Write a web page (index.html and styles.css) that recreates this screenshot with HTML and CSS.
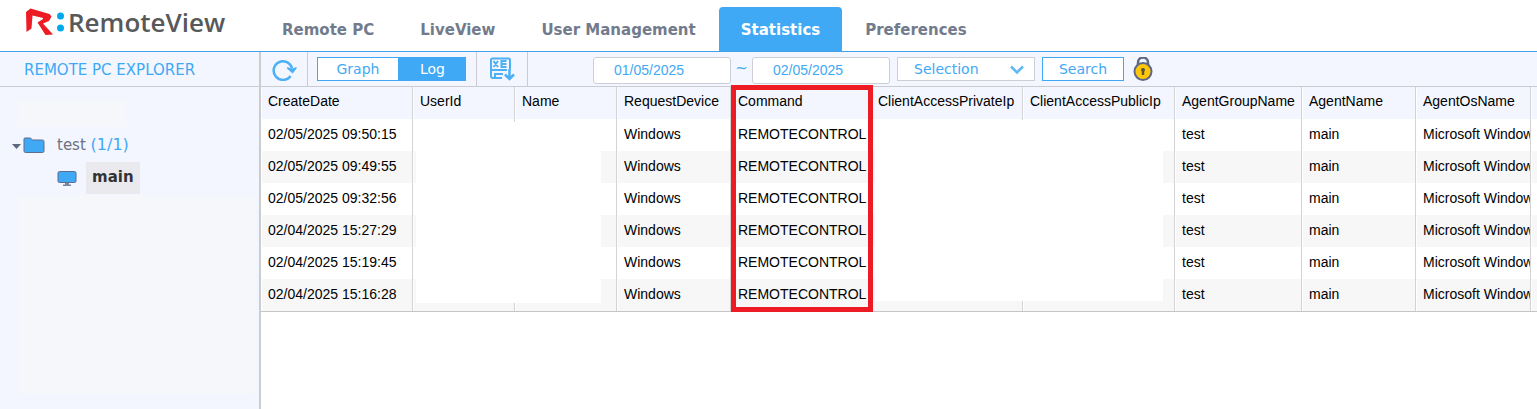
FILE: index.html
```html
<!DOCTYPE html>
<html lang="en">
<head>
<meta charset="utf-8">
<title>RemoteView</title>
<link rel="stylesheet" href="styles.css">
</head>
<body>
<div class="app">
  <header class="header">
    <a class="logo" href="#">
      <svg class="logo-mark" width="41" height="30" viewBox="0 0 41 30" aria-hidden="true">
        <path d="M1 4 L5.500 .500 L24.500 6 L26.500 8.500 L24 13 L18 15.500 L28 26.500 L20.500 27 L12.500 14.500 L18 11 L18 10 L7.500 7.500 L6.500 20.500 L1.500 24 Z" fill="#ed1c24"/>
        <circle cx="35.500" cy="8" r="3.500" fill="#00a9e8"/><circle cx="35.500" cy="20" r="3.500" fill="#00a9e8"/>
      </svg>
      <span class="logo-text">RemoteView</span>
    </a>
    <nav class="nav">
      <a class="tab" href="#">Remote PC</a>
      <a class="tab" href="#">LiveView</a>
      <a class="tab" href="#">User Management</a>
      <a class="tab active" href="#" aria-current="page">Statistics</a>
      <a class="tab" href="#">Preferences</a>
    </nav>
  </header>
  <div class="body">
    <aside class="sidebar">
      <h2 class="sidebar-title">REMOTE PC EXPLORER</h2>
      <div class="tree">
        <div class="blank blank-short"></div>
        <a class="node" href="#">
          <svg width="34" height="18" viewBox="0 0 34 18" aria-hidden="true">
            <path d="M0 8h9L4.500 13z" fill="#5d6780"/>
            <path d="M12 3q0-1 1-1h5.500l2 2h10q1.500 0 1.500 1.500v9.500q0 1.500-1.500 1.500h-17q-1.500 0-1.500-1.500z" fill="#3fa9f5" stroke="#5d6f8e"/>
          </svg>
          <span>test <span class="count">(1/1)</span></span>
        </a>
        <a class="node child" href="#">
          <svg width="20" height="16" viewBox="0 0 20 16" aria-hidden="true">
            <rect x="1" y="1.500" width="18" height="11" rx="1.500" fill="#3fa9f5" stroke="#5d6f8e"/>
            <path d="M8 13h4v1.500h2V16H6v-1.500h2z" fill="#7d879c"/>
          </svg>
          <strong class="chip">main</strong>
        </a>
        <div class="blank blank-tall"></div>
      </div>
    </aside>
    <main class="main">
      <form class="toolbar">
        <div class="cell cell-refresh">
          <button class="icon" type="button" aria-label="Refresh">
            <svg width="26" height="22" viewBox="0 0 26 22" fill="none">
              <path d="M19.500 17A9.300 9.300 0 1 1 21 9.500" stroke="#4bb0f5" stroke-width="2.500"/>
              <path d="M16.500 9l4.500 1.500L25 9l-3.500 4.500z" fill="#4bb0f5" stroke="#4bb0f5" stroke-width="1.500" stroke-linejoin="round"/>
            </svg>
          </button>
        </div>
        <div class="cell cell-view">
          <button class="view" type="button">Graph</button><button class="view selected" type="button" aria-pressed="true">Log</button>
        </div>
        <div class="cell cell-export">
          <button class="icon" type="button" aria-label="Export to Excel">
            <svg width="26" height="24" viewBox="0 0 26 24" fill="none" stroke="#4bb0f5" stroke-width="2">
              <path d="M2 14V3q0-1.500 1.500-1.500h16Q21 1.500 21 3v9M2 13h16M2 13v6q0 2 2 2h9M6 21v-4h8"/>
              <path d="M4.500 4l4.500 6M9 4l-4.500 6M12.500 3v8M12 4h5.500M12 7h5.500M12 10h5.500"/>
              <path d="M20.500 12v10M16 17.500l4.500 4.500 4.500-4.500" stroke-width="2.500"/>
            </svg>
          </button>
        </div>
        <div class="filters">
          <input class="date" type="text" value="01/05/2025" aria-label="From">
          <span class="tilde">~</span>
          <input class="date" type="text" value="02/05/2025" aria-label="To">
          <div class="picker">
            <select class="select" aria-label="Filter"><option>Selection</option></select>
            <svg class="chevron" width="14" height="10" viewBox="0 0 14 10" fill="none" aria-hidden="true"><path d="M1 1.500l6 6 6-6" stroke="#63b8f3" stroke-width="2.500"/></svg>
          </div>
          <button class="search" type="submit">Search</button>
          <button class="icon lock" type="button" aria-label="Lock">
            <svg width="20" height="25" viewBox="0 0 20 25">
              <path d="M5 9V5.500a5 5 0 0 1 10 0V9" fill="none" stroke="#5f6882" stroke-width="2.500"/>
              <circle cx="10" cy="14.500" r="8.500" fill="#ffc60a" stroke="#5f6882" stroke-width="2"/>
              <path d="M10 11a2 2 0 0 1 1.200 3.600V18H8.800v-3.400A2 2 0 0 1 10 11z" fill="#5c5433"/>
            </svg>
          </button>
        </div>
      </form>
      <div class="grid">
        <table class="table">
          <colgroup><col class="w152"><col class="w102"><col class="w102"><col class="w114"><col class="w140"><col class="w152"><col class="w152"><col class="w127"><col class="w114"><col class="w115"><col></colgroup>
          <thead>
            <tr><th>CreateDate</th><th>UserId</th><th>Name</th><th>RequestDevice</th><th>Command</th><th>ClientAccessPrivateIp</th><th>ClientAccessPublicIp</th><th>AgentGroupName</th><th>AgentName</th><th>AgentOsName</th><th></th></tr>
          </thead>
          <tbody>
            <tr><td>02/05/2025 09:50:15</td><td></td><td></td><td>Windows</td><td>REMOTECONTROL</td><td></td><td></td><td>test</td><td>main</td><td>Microsoft Window</td><td></td></tr>
            <tr><td>02/05/2025 09:49:55</td><td></td><td></td><td>Windows</td><td>REMOTECONTROL</td><td></td><td></td><td>test</td><td>main</td><td>Microsoft Window</td><td></td></tr>
            <tr><td>02/05/2025 09:32:56</td><td></td><td></td><td>Windows</td><td>REMOTECONTROL</td><td></td><td></td><td>test</td><td>main</td><td>Microsoft Window</td><td></td></tr>
            <tr><td>02/04/2025 15:27:29</td><td></td><td></td><td>Windows</td><td>REMOTECONTROL</td><td></td><td></td><td>test</td><td>main</td><td>Microsoft Window</td><td></td></tr>
            <tr><td>02/04/2025 15:19:45</td><td></td><td></td><td>Windows</td><td>REMOTECONTROL</td><td></td><td></td><td>test</td><td>main</td><td>Microsoft Window</td><td></td></tr>
            <tr><td>02/04/2025 15:16:28</td><td></td><td></td><td>Windows</td><td>REMOTECONTROL</td><td></td><td></td><td>test</td><td>main</td><td>Microsoft Window</td><td></td></tr>
          </tbody>
        </table>
        <div class="mask mask-user"></div>
        <div class="mask mask-ip"></div>
        <div class="highlight"></div>
      </div>
    </main>
  </div>
</div>
</body>
</html>
```
FILE: styles.css
```css
* { box-sizing: border-box; }
body { margin: 0; background: #fff; color: #000; font-family: "DejaVu Sans", Verdana, sans-serif; font-size: 15px; }
a { color: inherit; text-decoration: none; }
button, input, select { margin: 0; font-family: inherit; font-size: 14px; color: #3fa9f5; }
svg { display: block; }
.app { display: flex; flex-direction: column; min-height: 100vh; overflow: hidden; }

.header { display: flex; height: 52px; border-bottom: 1px solid #3fa3e6; }
.logo { display: flex; flex: 0 0 259px; align-items: flex-start; gap: 2px; padding: 8px 0 0 25px; }
.logo-text { color: #58595b; font: 600 26px/28px "Open Sans", sans-serif; }
.nav { display: flex; align-items: flex-end; }
.tab { height: 44px; padding: 0 23px; border-radius: 4px 4px 0 0; color: #727b8c; font-weight: bold; line-height: 46px; white-space: nowrap; }
.active { padding: 0 22px; background: #3fa9f5; color: #fff; }

.body { display: flex; flex: 1; }
.sidebar { flex: 0 0 261px; border-right: 2px solid #ccc; background: #f3f6fe; }
.sidebar-title { height: 35px; margin: 0; padding-left: 24px; border-bottom: 1px solid #c9ccd3; color: #3fa9f5; font-size: 15px; font-weight: normal; line-height: 36px; }
.tree { padding-top: 13px; }
.blank { margin-left: 18px; background: #f5f7fa; }
.blank-short { width: 108px; height: 27px; }
.blank-tall { height: 198px; margin: 2px 4px 0 18px; }
.node { display: flex; align-items: center; gap: 11px; height: 35px; padding-left: 12px; color: #6b7280; }
.count { color: #3fa9f5; font-size: 16px; }
.child { height: 32px; gap: 9px; padding-left: 57px; color: #333; }
.chip { height: 32px; padding: 0 6px; background: #e9e9ee; line-height: 30px; }

.main { flex: 1; min-width: 0; }
.toolbar { display: flex; height: 35px; border-bottom: 1px solid #c9ccd3; background: #f3f6fe; }
.cell { display: flex; align-items: center; border-right: 1px solid #c9ccd3; }
.cell-refresh { padding: 2px 10px 0; }
.cell-view { padding: 0 10px 0 9px; }
.cell-export { padding: 0 12px; }
.icon { padding: 0; border: 0; background: none; }
.view { width: 82px; height: 24px; padding: 0; border: 1px solid #3fa9f5; background: #fff; }
.selected { width: 67px; background: #3fa9f5; color: #fff; }
.filters { display: flex; align-items: flex-start; padding: 5px 0 0 65px; }
.date { width: 138px; height: 27px; padding: 0 0 1px 20px; border: 1px solid #ccd0d6; border-radius: 3px; background: #fff; font-family: "Liberation Sans", Arial, sans-serif; }
.tilde { width: 21px; color: #3fa9f5; line-height: 22px; text-align: center; }
.picker { position: relative; margin-left: 7px; }
.select { width: 138px; height: 24px; padding: 0 16px; border: 1px solid #ccd0d6; border-radius: 0; background: #fff; appearance: none; }
.chevron { position: absolute; top: 8px; right: 11px; pointer-events: none; }
.search { width: 82px; height: 24px; margin-left: 7px; padding: 0; border: 1px solid #3fa9f5; background: #fff; }
.lock { margin-left: 9px; }

.grid { position: relative; border-bottom: 1px solid #c6c6c6; font-family: "Liberation Sans", Arial, sans-serif; }
.table { width: 100%; border-collapse: separate; border-spacing: 0; table-layout: fixed; font-size: 14px; }
.table th, .table td { height: 32px; padding: 0 0 0 7px; border-right: 1px solid #d3d3d6; box-shadow: inset 1px 0 #fff; font-weight: normal; line-height: 30px; text-align: left; vertical-align: top; white-space: nowrap; overflow: hidden; }
.table th { background: #f3f6fe; line-height: 29px; }
.table th:last-child, .table td:last-child { padding: 0; border-right: 0; }
.table tbody tr:nth-child(even) { background: #f7f7f7; }
.w102 { width: 102px; }
.w114 { width: 114px; }
.w115 { width: 115px; }
.w127 { width: 127px; }
.w140 { width: 140px; }
.w152 { width: 152px; }
.mask { position: absolute; background: #fff; }
.mask-user { left: 155px; top: 35px; bottom: 8px; width: 185px; }
.mask-ip { left: 614px; top: 33px; bottom: 10px; width: 288px; }
.highlight { position: absolute; left: 470px; top: -2px; bottom: -1px; width: 142px; border: 5px solid #ed1c24; }
```
